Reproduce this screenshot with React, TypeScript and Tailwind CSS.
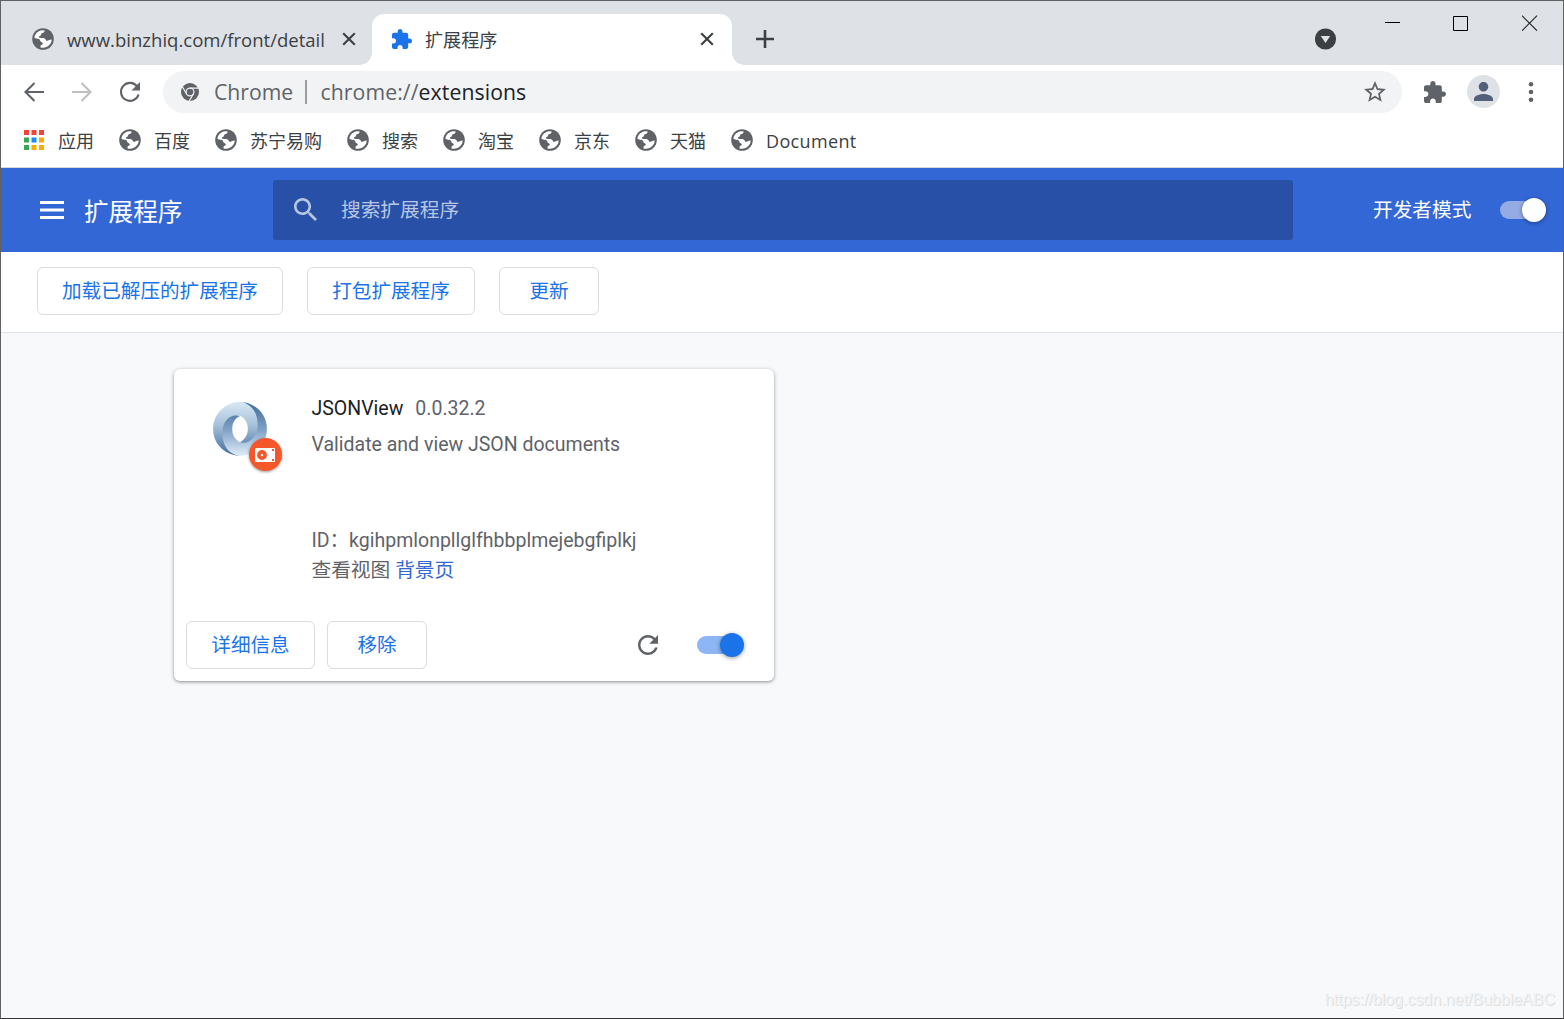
import type { ReactNode } from 'react'

const UI = 'font-["Open_Sans","Noto_Sans_CJK_SC",sans-serif]'
const WEB = 'font-[Roboto,"Noto_Sans_CJK_SC",sans-serif]'

function Globe() {
  return (
    <svg width="22" height="22" viewBox="0 0 22 22" className="shrink-0">
      <circle cx="11" cy="11" r="10.8" fill="#5f6368" />
      <path
        fill="#fff"
        d="M2.4 9.4C3 5.6 6.2 2.5 10.2 2.200L12.600 2.400C12.700 3.800 11.800 4.800 10.500 5C9.200 5.200 9.300 6 9 7C8.700 8 6.900 7.900 6.700 9C6.700 9.800 8.600 10 10.800 10C13.400 10 13.800 12.600 14.800 12.900C16.400 13 16.900 11.600 19.700 11.600C19.500 16.200 15.800 19.800 11 19.800C10.100 19.800 9.200 19.700 8.500 19.400C8.500 17.800 8.500 17 9.800 16.700C11.400 16.400 11 14.800 9.800 14.200C7.800 13.400 8.600 11.200 6.300 10.700C5 10.400 3.500 10.700 2.400 9.400Z"
      />
    </svg>
  )
}

function Puzzle({ size, className }: { size: number; className: string }) {
  return (
    <svg width={size} height={size} viewBox="2 1 21 21" className={className} fill="currentColor">
      <path d="M20.5 11H19V7c0-1.100-.9-2-2-2h-4V3.500C13 2.120 11.880 1 10.500 1S8 2.120 8 3.500V5H4c-1.100 0-1.990.9-1.990 2v3.800H3.500c1.490 0 2.700 1.210 2.700 2.700s-1.210 2.700-2.700 2.700H2V20c0 1.100.9 2 2 2h3.800v-1.500c0-1.490 1.210-2.700 2.700-2.700s2.700 1.210 2.700 2.700V22H17c1.100 0 2-.9 2-2v-4h1.500c1.380 0 2.500-1.120 2.500-2.500S21.880 11 20.500 11z" />
    </svg>
  )
}

function Close() {
  return (
    <svg width="14" height="14" viewBox="0 0 14 14" className="shrink-0" stroke="#3c4043" strokeWidth="2.1">
      <path d="M1.200 1.200 12.800 12.800M12.800 1.200 1.200 12.800" />
    </svg>
  )
}

function Reload({ size }: { size: number }) {
  return (
    <svg width={size} height={size} viewBox="4 4 16 16" className="shrink-0" fill="#5f6368">
      <path d="M17.650 6.350C16.200 4.900 14.210 4 12 4c-4.420 0-7.990 3.580-7.990 8s3.570 8 7.990 8c3.730 0 6.840-2.550 7.730-6h-2.080c-.82 2.330-3.040 4-5.650 4-3.310 0-6-2.690-6-6s2.690-6 6-6c1.660 0 3.140.69 4.220 1.780L13 11h7V4l-2.350 2.350z" />
    </svg>
  )
}

function ThinReload() {
  return (
    <svg width="22" height="22" viewBox="0 0 22 22" className="shrink-0" fill="none">
      <path d="M18.300 5.600A9 9 0 1 0 19.600 13.500" stroke="#5f6368" strokeWidth="2.100" />
      <path d="M21 1v8.500h-8.500z" fill="#5f6368" />
    </svg>
  )
}

function Arrow({ color, flip }: { color: string; flip?: boolean }) {
  return (
    <svg width="20" height="20" viewBox="0 0 20 20" className={flip ? 'shrink-0 rotate-180' : 'shrink-0'} fill="none" stroke={color} strokeWidth="2.100">
      <path d="M20 10H1.800M10.500 1 1.500 10l9 9" />
    </svg>
  )
}

function ChromeMark() {
  return (
    <svg width="18" height="18" viewBox="0 0 18 18" className="shrink-0">
      <circle cx="9" cy="9" r="9" fill="#5f6368" />
      <g fill="none" stroke="#f1f3f4" strokeWidth="1.200">
        <circle cx="9" cy="9" r="3.900" />
        <path d="M9 5.100H17.500M5.620 10.950 1.400 3.800M12.380 10.950 8.200 18" />
      </g>
    </svg>
  )
}

function AppsGrid() {
  const colors = ['#f44336', '#f44336', '#f44336', '#34a853', '#1e88fb', '#f9ab00', '#34a853', '#f9ab00', '#f9ab00']
  return (
    <svg width="20" height="20" viewBox="0 0 20 20" className="shrink-0">
      {colors.map((c, i) => (
        <rect key={i} x={(i % 3) * 7.5} y={Math.floor(i / 3) * 7.5} width="5" height="5" fill={c} />
      ))}
    </svg>
  )
}

function JsonLogo() {
  return (
    <svg width="54" height="54" viewBox="0 0 160 160">
      <defs>
        <linearGradient id="fall" x1="0" y1="0" x2="0" y2="1">
          <stop offset="0" stopColor="#d9e8f5" />
          <stop offset=".45" stopColor="#a3bfd9" />
          <stop offset="1" stopColor="#3f6b9c" />
        </linearGradient>
        <linearGradient id="rise" x1="0" y1="0" x2="0" y2="1">
          <stop offset="0" stopColor="#3f6b9c" />
          <stop offset=".5" stopColor="#7d9fc3" />
          <stop offset="1" stopColor="#dfecf8" />
        </linearGradient>
      </defs>
      <path fill="url(#fall)" d="M79.900 119.100c35.400 48.250 70.040-13.200 70-50.580C149.800 24.340 105.060-.24 79.840-.24 39.370-.24.240 33.290.240 79.860c0 51.400 44.600 79.400 79.600 79.400-7.900-1.140-34.300-6.800-34.650-67.980-.24-41.400 13.500-57.970 34.600-50.780.47.170 23.500 9.260 23.500 38.950 0 29.560-23.420 39.660-23.420 39.660z" />
      <path fill="url(#rise)" d="M79.820 41.400C56.430 33.300 27.800 52.600 27.800 91.200c0 63.050 46.700 68.260 52.400 68.260 40.500 0 79.600-33.500 79.600-80.100C159.800 27.960 115.200 0 80.200 0c9.700-1.350 52.260 10.500 52.260 69.030 0 38.200-32 59-52.100 50.200-.48-.18-23.500-9.270-23.500-38.960 0-29.560 22.960-38.870 22.960-38.870z" />
    </svg>
  )
}

function UnpackedBadge() {
  return (
    <div className="absolute left-[36px] top-[36px] flex h-[33px] w-[33px] items-center justify-center rounded-full bg-[#f4582a] shadow-[0_1px_3px_rgba(0,0,0,0.4)]">
      <svg width="20" height="14" viewBox="0 0 20 14" className="mr-px">
        <rect width="20" height="14" rx="1" fill="#fff" />
        <circle cx="7" cy="7" r="4.900" fill="#f4582a" />
        <circle cx="7" cy="7" r="1.200" fill="#fff" />
        <path d="M17 1h2v2h-2zM17 11h2v2h-2z" fill="#f4582a" />
      </svg>
    </div>
  )
}

function OutlineButton({ children, className }: { children: ReactNode; className: string }) {
  return (
    <button className={`flex h-12 shrink-0 items-center justify-center whitespace-nowrap rounded-[6px] border border-[#dadce0] bg-white pt-px text-[19.6px] leading-none text-[#1a73e8] ${className}`}>
      {children}
    </button>
  )
}

function Toggle({ track, knob, offset }: { track: string; knob: string; offset: string }) {
  return (
    <div className={`flex h-[18px] w-[42px] shrink-0 items-center rounded-full ${track}`}>
      <span className={`h-6 w-6 shrink-0 rounded-full shadow-[0_1px_4px_rgba(0,0,0,0.4)] ${offset} ${knob}`} />
    </div>
  )
}

function TabStrip() {
  return (
    <div className="flex h-16 shrink-0 items-end bg-[#dee1e6]">
      <div className="flex h-[51px] w-[371px] shrink-0 items-center pb-0.5 pl-[31px]">
        <Globe />
        <span className="ml-[13px] w-[275px] whitespace-nowrap pt-0.5 text-[18.55px] text-[#3c4043]">www.binzhiq.com/front/detail</span>
        <Close />
      </div>
      <div className="relative flex h-[51px] w-[360px] shrink-0 items-center rounded-t-[12px] bg-white pb-0.5 pl-[20px]">
        <span className="absolute -left-3 bottom-0 h-3 w-3 bg-[radial-gradient(circle_at_0_0,#dee1e6_11.500px,#fff_12px)]" />
        <span className="absolute -right-3 bottom-0 h-3 w-3 bg-[radial-gradient(circle_at_100%_0,#dee1e6_11.500px,#fff_12px)]" />
        <Puzzle size={20} className="text-[#1a73e8]" />
        <span className="ml-[13px] w-[275px] whitespace-nowrap pt-1 text-[18.1px] text-[#3c4043]">扩展程序</span>
        <Close />
      </div>
      <svg width="18" height="18" viewBox="0 0 18 18" className="mb-[17px] ml-[23.500px]" stroke="#3c4043" strokeWidth="2.600">
        <path d="M9 0v18M0 9h18" />
      </svg>
      <svg width="22" height="22" viewBox="0 0 22 22" className="mb-[15px] ml-auto">
        <circle cx="10.500" cy="11" r="10.600" fill="#3c4043" />
        <path d="M5.800 8h9.400l-4.700 7z" fill="#dee1e6" />
      </svg>
      <div className="mb-[34px] ml-[48px] mr-[25px] flex items-center">
        <svg width="16" height="16" viewBox="0 0 16 16" shapeRendering="crispEdges">
          <path d="M0 7h15v1H0z" />
        </svg>
        <svg width="15" height="15" viewBox="0 0 15 15" className="ml-[52px]" fill="none" stroke="#000">
          <path d="M.5.5h14v14H.5z" />
        </svg>
        <svg width="16" height="16" viewBox="0 0 16 16" className="ml-[54px]" fill="none" stroke="#222" strokeWidth="1.100">
          <path d="m0 .7 15 15m0-15-15 15" />
        </svg>
      </div>
    </div>
  )
}

function AddressRow() {
  return (
    <div className="flex h-[54px] shrink-0 items-center pl-[23px]">
      <div className="flex shrink-0 items-center pb-px">
        <Arrow color="#5f6368" />
        <span className="w-[28px]" />
        <Arrow color="#bdbfc1" flip />
        <span className="w-[27px]" />
        <ThinReload />
      </div>
      <div className="ml-[22px] flex h-[42px] w-[1239px] shrink-0 items-center rounded-full bg-[#f1f3f4] pl-[18px] pr-[15px] text-[21.2px] text-[#5f6368]">
        <ChromeMark />
        <span className="ml-[15px] w-[91px] whitespace-nowrap">Chrome</span>
        <span className="h-6 w-[2px] bg-[#9a9da1]" />
        <span className="ml-[13.500px] whitespace-nowrap tracking-[0.1px]">
          chrome://<span className="text-[#202124]">extensions</span>
        </span>
        <svg width="24" height="24" viewBox="1 1 22 22" className="ml-auto" fill="#5f6368">
          <path d="M22 9.240l-7.190-.62L12 2 9.190 8.630 2 9.240l5.460 4.730L5.820 21 12 17.270 18.180 21l-1.630-7.030L22 9.240zM12 15.400l-3.760 2.270 1-4.280-3.320-2.880 4.380-.38L12 6.100l1.710 4.040 4.380.38-3.320 2.880 1 4.280L12 15.400z" />
        </svg>
      </div>
      <Puzzle size={22} className="ml-[22px] shrink-0 text-[#5f6368]" />
      <div className="mb-px ml-[21px] flex h-[33px] w-[33px] shrink-0 items-center justify-center rounded-full bg-[#dee1e6]">
        <svg width="19" height="19" viewBox="4 4 16 16" fill="#53607a">
          <path d="M12 12c2.210 0 4-1.790 4-4s-1.790-4-4-4-4 1.790-4 4 1.790 4 4 4zm0 2c-2.670 0-8 1.340-8 4v2h16v-2c0-2.660-5.330-4-8-4z" />
        </svg>
      </div>
      <svg width="6" height="20" viewBox="0 0 6 20" className="mb-px ml-[28px] shrink-0" fill="#5f6368">
        <circle cx="3" cy="2.300" r="2.300" />
        <circle cx="3" cy="10" r="2.300" />
        <circle cx="3" cy="17.700" r="2.300" />
      </svg>
    </div>
  )
}

function Bookmarks() {
  return (
    <div className="flex h-[49px] shrink-0 items-center gap-[25px] border-b border-[#d5d8dc] pl-[23px] pb-[7px] text-[18px] leading-[22px] text-[#3c4043]">
      <div className="flex items-center gap-[14px]">
        <AppsGrid />
        <span className="pt-0.5">应用</span>
      </div>
      {['百度', '苏宁易购', '搜索', '淘宝', '京东', '天猫', 'Document'].map((name) => (
        <div key={name} className="flex items-center gap-[13px]">
          <Globe />
          <span className={`whitespace-nowrap pt-0.5 ${name === 'Document' ? 'tracking-[0.35px]' : ''}`}>{name}</span>
        </div>
      ))}
    </div>
  )
}

function Header() {
  return (
    <header className="flex h-[84px] shrink-0 items-center bg-[#3367d6] text-white">
      <svg width="24" height="18" viewBox="0 0 24 18" className="ml-[39px] shrink-0" fill="#fff">
        <path d="M0 0h24v3H0zM0 7.500h24v3H0zM0 15h24v3H0z" />
      </svg>
      <h1 className="ml-5 w-[189px] pt-1.5 text-[24.6px]">扩展程序</h1>
      <div className="flex h-[60px] w-[1020px] shrink-0 items-center rounded-[3px] bg-[#2850a7] pl-[21px] text-[19.7px] text-[#b8c6e4]">
        <svg width="23" height="23" viewBox="3 3 17.500 17.500" className="mb-px" fill="#b8c6e4">
          <path d="M15.500 14h-.79l-.28-.27C15.410 12.590 16 11.110 16 9.500 16 5.910 13.090 3 9.500 3S3 5.910 3 9.500 5.910 16 9.500 16c1.610 0 3.090-.59 4.230-1.570l.27.28v.79l5 4.990L20.490 19l-4.990-5zm-6 0C7.010 14 5 11.990 5 9.500S7.010 5 9.500 5 14 7.010 14 9.500 11.990 14 9.500 14z" />
        </svg>
        <span className="ml-6 pt-0.5">搜索扩展程序</span>
      </div>
      <span className="ml-20 w-[127px] pt-0.5 text-[19.7px]">开发者模式</span>
      <Toggle track="bg-[#95abe4]" knob="bg-white" offset="ml-[22px]" />
    </header>
  )
}

function ExtensionCard() {
  return (
    <article className="ml-[173px] mt-9 flex h-[312px] w-[600px] flex-col rounded-[6px] bg-white text-[19.5px] leading-[30px] text-[#5f6368] shadow-[0_1px_3px_rgba(60,64,67,0.45),0_1px_5px_rgba(60,64,67,0.18)]">
      <div className="flex h-[252px] pl-[39px]">
        <div className="relative mt-[33px] h-[54px] w-[54px]">
          <JsonLogo />
          <UnpackedBadge />
        </div>
        <div className="ml-[44.500px] pt-[25px]">
          <div className="flex gap-3">
            <span className="text-[#202124]">JSONView</span>
            <span>0.0.32.2</span>
          </div>
          <p className="mt-1.5">Validate and view JSON documents</p>
          <p className="mt-[66px] whitespace-nowrap">ID：kgihpmlonpllglfhbbplmejebgfiplkj</p>
          <p className="text-[19.7px]">
            查看视图 <a className="text-[#3367d6]">背景页</a>
          </p>
        </div>
      </div>
      <div className="flex h-12 items-center gap-3 pl-3">
        <OutlineButton className="w-[129px]">详细信息</OutlineButton>
        <OutlineButton className="w-[100px]">移除</OutlineButton>
        <span className="ml-[199px] mr-[27px]">
          <Reload size={20} />
        </span>
        <Toggle track="bg-[#8db7f4]" knob="bg-[#1a73e8]" offset="ml-[23px]" />
      </div>
    </article>
  )
}

export default function App() {
  return (
    <div className={`relative flex h-[1019px] w-[1564px] flex-col overflow-hidden border border-[#606163] border-b-[#353538] bg-white ${UI}`}>
      <TabStrip />
      <AddressRow />
      <Bookmarks />
      <div className={`flex flex-1 flex-col ${WEB}`}>
        <Header />
        <div className="flex h-[81px] shrink-0 gap-6 border-b border-[#dfe1e4] pl-9 pt-[15px]">
          <OutlineButton className="w-[246px]">加载已解压的扩展程序</OutlineButton>
          <OutlineButton className="w-[168px]">打包扩展程序</OutlineButton>
          <OutlineButton className="w-[100px]">更新</OutlineButton>
        </div>
        <main className="flex-1 bg-[#f8f9fb]">
          <ExtensionCard />
        </main>
      </div>
      <span className="absolute bottom-[6px] right-[8px] font-['Liberation_Sans',sans-serif] text-[16px] leading-6 text-[#f1f2f3] [text-shadow:1px_1px_0_#dddfe0]">https://blog.csdn.net/BubbleABC</span>
    </div>
  )
}
